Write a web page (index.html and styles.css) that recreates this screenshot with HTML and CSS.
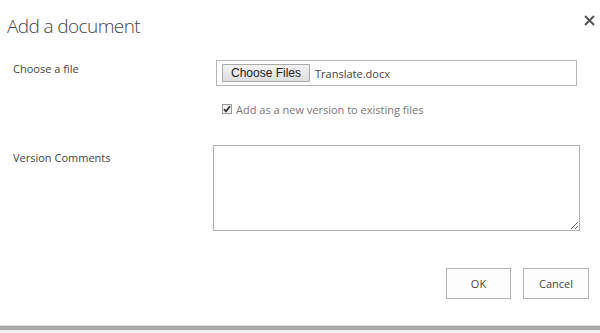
FILE: index.html
```html
<!DOCTYPE html>
<html>
<head>
    <link rel="stylesheet" href="styles.css">
</head>
<body>
    <div class="dialog">
        <div class="header">
            <h1 class="title">Add a document</h1>
            <button class="close-btn" aria-label="Close">
                <svg width="11" height="11" viewBox="0 0 11 11">
                    <path d="M1 1 L10 10 M10 1 L1 10" stroke="#555" stroke-width="2" fill="none"/>
                </svg>
            </button>
        </div>

        <div class="form">
            <div class="label">Choose a file</div>
            <div class="file-box">
                <span class="file-btn">Choose Files</span>
                <span class="file-name">Translate.docx</span>
            </div>

            <div class="check-row">
                <span class="check">
                    <svg width="8" height="8" viewBox="0 0 8 8">
                        <path d="M1 4.2 L3 6.4 L7 1.2" stroke="#333" stroke-width="1.8" fill="none"/>
                    </svg>
                </span>
                <span class="check-text">Add as a new version to existing files</span>
            </div>

            <div class="label label-comments">Version Comments</div>
            <textarea class="comments"></textarea>
        </div>

        <div class="actions">
            <button class="btn">OK</button>
            <button class="btn">Cancel</button>
        </div>
    </div>
    <div class="bar"></div>
    <div class="below"></div>
</body>
</html>
```

FILE: styles.css
```css
* {
    margin: 0;
    padding: 0;
    box-sizing: border-box;
}

html, body {
    height: 333px;
    overflow: hidden;
}

body {
    display: flex;
    flex-direction: column;
    background: #fff;
    font-family: "Open Sans", "Noto Sans", sans-serif;
    color: #444;
}

.dialog {
    flex: 1;
}

.header {
    display: flex;
    justify-content: space-between;
    align-items: flex-start;
    padding: 14px 5px 0 7px;
}

.title {
    font-size: 19px;
    font-weight: 300;
    line-height: 24px;
    letter-spacing: -0.6px;
    color: #444;
}

.close-btn {
    border: none;
    background: none;
    width: 11px;
    height: 11px;
    margin-top: 1px;
    display: flex;
}

.form {
    display: grid;
    grid-template-columns: 200px 367px;
    padding: 22px 0 0 13px;
}

.label {
    font-size: 11px;
    line-height: 14px;
    padding-top: 2px;
    color: #444;
}

.file-box {
    margin-left: 3px;
    width: 361px;
    height: 26px;
    border: 1px solid #b5b5b5;
    display: flex;
    align-items: center;
    padding-left: 5px;
    gap: 5px;
}

.file-btn {
    font-family: "Liberation Sans", Arial, sans-serif;
    font-size: 12px;
    color: #222;
    height: 18px;
    line-height: 16px;
    padding: 0 8px;
    border: 1px solid #a9a9a9;
    background: linear-gradient(#f3f3f3, #dedede);
    border-radius: 1px;
}

.file-name {
    font-size: 11px;
    color: #444;
}

.check-row {
    grid-column: 2;
    display: flex;
    align-items: center;
    gap: 4px;
    margin: 17px 0 0 9px;
    height: 12px;
}

.check {
    width: 10px;
    height: 10px;
    border: 1px solid #9a9a9a;
    background: #f4f4f4;
    display: flex;
    align-items: center;
    justify-content: center;
}

.check-text {
    font-size: 11px;
    color: #777;
}

.label-comments {
    grid-column: 1;
    margin-top: 30px;
    padding-top: 6px;
}

.comments {
    margin-top: 30px;
    width: 367px;
    height: 86px;
    border: 1px solid #b0b0b0;
    resize: both;
    font-family: inherit;
}

.actions {
    display: flex;
    justify-content: flex-end;
    gap: 12px;
    padding: 37px 11px 0 0;
}

.btn {
    width: 65px;
    height: 31px;
    border: 1px solid #b5b5b5;
    background: #fdfdfd;
    font-family: "Open Sans", sans-serif;
    font-size: 11px;
    color: #444;
}

.btn + .btn {
    width: 66px;
}

.bar {
    height: 5px;
    border-top: 1px solid #dcdcdc;
    background: #a8a8a8;
}

.below {
    height: 3px;
    background: #efefef;
}
```
